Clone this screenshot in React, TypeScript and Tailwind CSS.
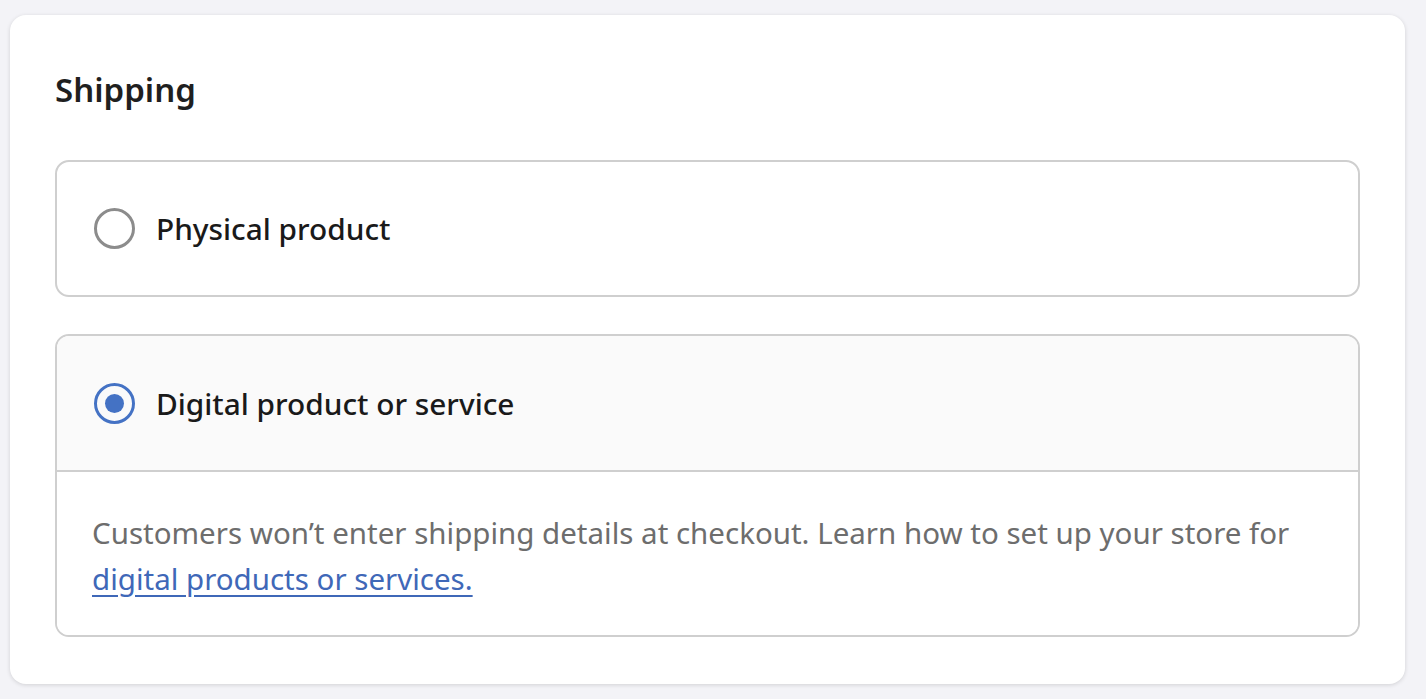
import React from "react";

export default function App() {
  return (
    <div className="min-h-screen bg-[#f3f3f7] pt-[15px] pl-[10px] pr-[21px]" style={{ fontFamily: '"Noto Sans", "Open Sans", sans-serif' }}>
      <div className="rounded-[16px] bg-white shadow-[0_1px_4px_rgba(0,0,0,0.14)] pl-[45px] pr-[45px] pt-[55px] pb-[47px]">
        <h2 className="text-[33px] leading-[40px] font-semibold text-[#1f1f1f]">Shipping</h2>
        <div className="mt-[50px] flex flex-col gap-[37px]">
          <label className="flex h-[137px] items-center rounded-[14px] border-2 border-[#cfcfcf] pl-[37px] bg-white">
            <span className="h-[41px] w-[41px] shrink-0 rounded-full border-[3.5px] border-[#8c8c8c]" />
            <span className="ml-[21px] pt-[2px] text-[29.8px] font-medium text-[#1a1a1a]">Physical product</span>
          </label>
          <div className="overflow-hidden rounded-[14px] border-2 border-[#cfcfcf]">
            <label className="flex h-[136px] items-center bg-[#fafafa] pl-[37px] border-b-2 border-[#cfcfcf]">
              <span className="flex h-[41px] w-[41px] shrink-0 items-center justify-center rounded-full border-[3.5px] border-[#4472c4]">
                <span className="h-[19px] w-[19px] rounded-full bg-[#4472c4]" />
              </span>
              <span className="ml-[21px] pt-[2px] text-[29.8px] font-medium text-[#1a1a1a]">Digital product or service</span>
            </label>
            <div className="bg-white pl-[35px] pr-[40px] pt-[38px] pb-[33px] text-[29.5px] leading-[46px] text-[#6d6d6d]">
              Customers won’t enter shipping details at checkout. Learn how to set up your store for{" "}
              <a href="#" className="text-[#3f68b8] underline underline-offset-[5px]">digital products or services.</a>
            </div>
          </div>
        </div>
      </div>
    </div>
  );
}
